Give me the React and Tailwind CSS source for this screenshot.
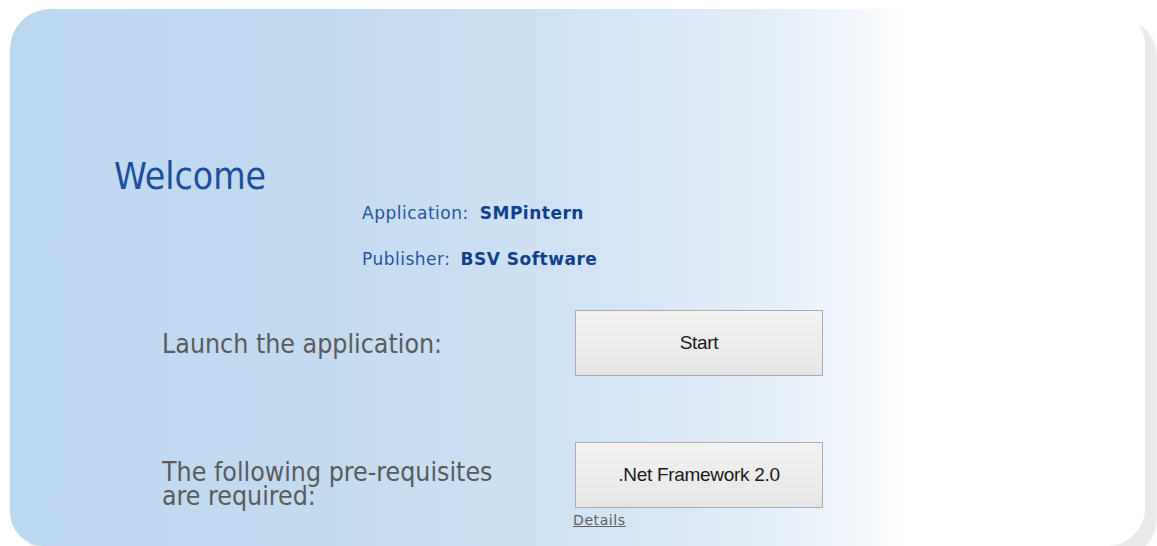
import React from "react";

// ClickOnce-style launch page: one rounded card, blue fading to white
const face = "font-['DejaVu_Sans_Condensed','DejaVu_Sans',Verdana,sans-serif] font-stretch-semi-condensed";
const wide = "font-['DejaVu_Sans',Verdana,sans-serif] font-stretch-normal";

function PlainButton({ children }) {
  return (
    <button
      type="button"
      className="w-[248px] h-[66px] border border-[#adadad] bg-[linear-gradient(to_bottom,#f2f2f2,#e6e6e6)] font-['Liberation_Sans',Arial,sans-serif] text-[19px] tracking-[-0.3px] text-[#1a1a1a]"
    >
      {children}
    </button>
  );
}

export default function App() {
  return (
    <div className="min-h-[546px] bg-white pt-[9px] pl-[10px] overflow-hidden">
      <div
        className={`w-[1135px] h-[537px] rounded-tl-[40px] rounded-tr-[36px] rounded-bl-[34px] rounded-br-[38px] shadow-[12px_11px_2px_#e9e9e9] bg-[linear-gradient(to_right,#bcd8f0_0%,#c3dbf1_28%,#cfe2f4_48%,#e2edf8_66%,#f1f6fc_74%,#ffffff_79%)] ${face}`}
      >
        <div className="pt-[148px] pl-[104px]">
          <h1 className="text-[37px] leading-[40px] text-[#1b4f9c]">Welcome</h1>
        </div>

        {/* application / publisher */}
        <div className={`pl-[352px] mt-[7px] flex flex-col gap-[27px] text-[17px] leading-[19px] tracking-[0.5px] text-[#2456a3] ${wide}`}>
          <p>
            Application:<span className="ml-[11px] font-bold text-[#10408c]">SMPintern</span>
          </p>
          <p>
            Publisher:<span className="ml-[10px] font-bold text-[#10408c]">BSV Software</span>
          </p>
        </div>

        <div className="pl-[152px] mt-[41px] grid grid-cols-[413px_248px] text-[26.5px] leading-[24px] text-[#5b5b5b]">
          <p className="self-center pt-[2px]">Launch the application:</p>
          <PlainButton>Start</PlainButton>

          <p className="mt-[74px] pt-[10px]">
            The following pre-requisites
            <br />
            are required:
          </p>
          <div className="mt-[66px] flex flex-col">
            <PlainButton>.Net Framework 2.0</PlainButton>
            <a
              href="#"
              className={`self-start -ml-[2px] mt-[4px] text-[14px] leading-[16px] tracking-[0.6px] text-[#606060] underline ${wide}`}
            >
              Details
            </a>
          </div>
        </div>
      </div>
    </div>
  );
}
